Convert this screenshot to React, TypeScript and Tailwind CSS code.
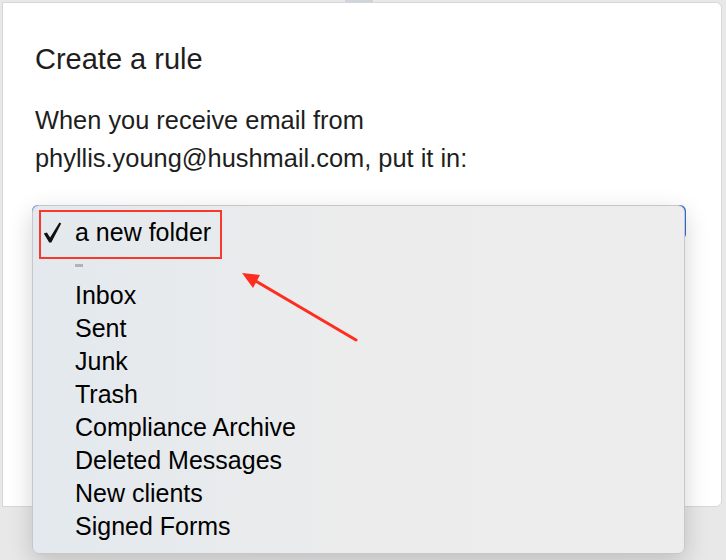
import { useState } from 'react'

const folders = [
  'Inbox',
  'Sent',
  'Junk',
  'Trash',
  'Compliance Archive',
  'Deleted Messages',
  'New clients',
  'Signed Forms',
]

function CheckMark() {
  return (
    <svg width="19" height="21" viewBox="0 0 19 21" className="shrink-0">
      <path d="M0.8 11.6 L3.9 10.4 L7.1 15.6 L16.4 0.6 L18.2 1.4 L8.3 20.4 L6.2 20.4 Z" fill="#111" />
    </svg>
  )
}

function FolderMenu() {
  const [selected] = useState('a new folder')

  return (
    <div className="absolute -left-[2px] -top-[2px] z-10 w-[653px] h-[349px] rounded-[7px] border border-[#c7c7c7] bg-gradient-to-r from-[#e3e9ee] via-[#ececec] to-[#ededed] px-[6px] pt-[4px] shadow-[0_8px_24px_rgba(0,0,0,0.18)]">
      <div className="flex h-[49px] w-[183px] items-center border-2 border-[#f7392c] pb-[5px] pl-[2px]">
        <CheckMark />
        <span className="ml-[13px] text-[25px] leading-none text-black">{selected}</span>
      </div>
      <div className="h-[20px] pl-[36px] pt-[5px]">
        <div className="h-[3px] w-[8px] bg-[#b4b4b4]" />
      </div>
      <ul>
        {folders.map((f) => (
          <li key={f} className="h-[33px] pl-[36px] text-[25px] leading-[33px] text-black">
            {f}
          </li>
        ))}
      </ul>
    </div>
  )
}

export default function App() {
  return (
    <div className="relative h-[560px] w-[726px] overflow-hidden bg-[#e8e8e8] pl-[2px] pt-[2px] font-['Liberation_Sans',Arial,sans-serif]">
      <div className="absolute left-[345px] top-0 h-[3px] w-[28px] rounded-b-[2px] bg-[#cfd5dc]" />
      <div className="h-[505px] w-[720px] rounded-r-[6px] border border-[#d7d7d7] bg-white">
        <h1 className="px-[32px] pt-[42px] text-[29px] leading-[29px] text-[#1e1e1e]">Create a rule</h1>
        <p className="mt-[27px] px-[32px] text-[25.4px] leading-[38px] text-[#1e1e1e]">
          When you receive email from
          <br />
          phyllis.young@hushmail.com, put it in:
        </p>
        <div className="relative ml-[29px] mt-[28px] h-[35px] w-[654px] rounded-[6px] border-2 border-[#2f6fde] bg-white">
          <FolderMenu />
        </div>
      </div>
      <svg className="pointer-events-none absolute left-0 top-0 z-20" width="726" height="560">
        <line x1="356" y1="340" x2="254" y2="280" stroke="#ff2d1f" strokeWidth="3" strokeLinecap="round" />
        <polygon points="242,273 260,275 253,288" fill="#ff2d1f" />
      </svg>
    </div>
  )
}
